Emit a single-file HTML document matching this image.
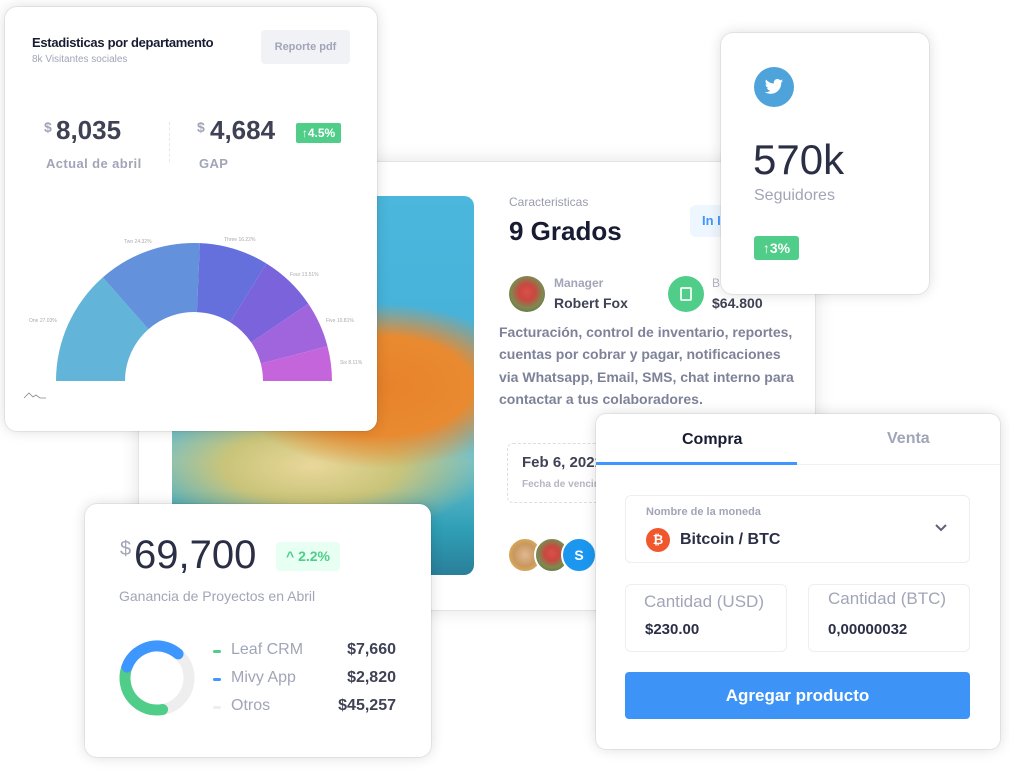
<!DOCTYPE html>
<html><head><meta charset="utf-8">
<style>
*{margin:0;padding:0;box-sizing:border-box}
body{width:1010px;height:784px;background:#fff;position:relative;overflow:hidden;font-family:"Liberation Sans",sans-serif;color:#181c32}
.card{position:absolute;background:#fff;border-radius:12px;box-shadow:0 0 14px rgba(0,0,0,.14),0 0 0 1px rgba(0,0,0,.06)}
.t{position:absolute;white-space:nowrap}
.g{color:#a1a5b7}
.b{font-weight:bold}
</style></head><body>

<!-- center card -->
<div class="card" style="left:139px;top:162px;width:676px;height:448px;border-radius:4px;box-shadow:0 0 20px rgba(0,0,0,.12),0 0 0 1px rgba(0,0,0,.05)">
  <div style="position:absolute;left:33px;top:34px;width:302px;height:379px;border-radius:10px;overflow:hidden;
    background:
     radial-gradient(ellipse 70px 150px at 60px 70px,#b0a8a8 0%,#9a99a6 40%,rgba(150,150,160,0) 75%),
     radial-gradient(ellipse 200px 110px at 210px 190px,#e7822b 0%,#e98a30 45%,rgba(230,130,40,0) 75%),
     radial-gradient(ellipse 220px 90px at 140px 270px,#e9d79a 0%,#c9c47a 40%,rgba(200,190,120,0) 80%),
     linear-gradient(180deg,#4bb7dc 0%,#45b1da 45%,#6cc0d0 70%,#2f9fb6 88%,#2a7f9a 100%)"></div>
  <div class="t g" style="left:370px;top:33px;font-size:12px;color:#9a9cae">Caracteristicas</div>
  <div class="t b" style="left:370px;top:54px;font-size:26px;color:#181c32">9 Grados</div>
  <div style="position:absolute;left:551px;top:43px;width:40px;height:32px;background:#eef6ff;border-radius:6px"></div>
  <div class="t b" style="left:563px;top:51px;font-size:13px;color:#3e97ff">In I</div>
  <div style="position:absolute;left:370px;top:114px;width:36px;height:36px;border-radius:50%;background:radial-gradient(circle at 50% 45%,#d8504a 0%,#c94840 30%,#7d8a50 60%,#4a6040 100%)"></div>
  <div class="t b" style="left:415px;top:114px;font-size:12px;color:#a1a5b7">Manager</div>
  <div class="t b" style="left:415px;top:133px;font-size:14px;color:#3f4254">Robert Fox</div>
  <div style="position:absolute;left:529px;top:114px;width:36px;height:36px;border-radius:50%;background:#50cd89"></div>
  <div style="position:absolute;left:541px;top:125px;width:12px;height:14px;border:2px solid #e6f8ee;border-radius:2px"></div>
  <div class="t" style="left:573px;top:114px;font-size:12px;color:#b5b5c3">B</div>
  <div class="t b" style="left:573px;top:133px;font-size:14px;color:#3f4254">$64.800</div>
  <div class="t b" style="left:360px;top:159px;font-size:14px;line-height:22.3px;color:#7e8299">Facturación, control de inventario, reportes,<br>cuentas por cobrar y pagar, notificaciones<br>via Whatsapp, Email, SMS, chat interno para<br>contactar a tus colaboradores.</div>
  <div style="position:absolute;left:368px;top:281px;width:110px;height:60px;border:1px dashed #dcdde4;border-radius:6px"></div>
  <div class="t b" style="left:383px;top:292px;font-size:15px;color:#3f4254">Feb 6, 2021</div>
  <div class="t b" style="left:383px;top:317px;font-size:10px;color:#b5b5c3">Fecha de vencimiento</div>
  <div style="position:absolute;left:368px;top:375px;width:36px;height:36px;border-radius:50%;background:radial-gradient(circle at 50% 50%,#e0b890 0%,#c99860 50%,#e8c050 100%);border:2px solid #fff"></div>
  <div style="position:absolute;left:395px;top:375px;width:36px;height:36px;border-radius:50%;background:radial-gradient(circle at 50% 45%,#d8504a 0%,#c94840 30%,#7d8a50 60%,#4a6040 100%);border:2px solid #fff"></div>
  <div style="position:absolute;left:422px;top:375px;width:36px;height:36px;border-radius:50%;background:#1b97ef;border:2px solid #fff;color:#fff;font-weight:bold;font-size:14px;text-align:center;line-height:32px">S</div>
</div>

<!-- top left card -->
<div class="card" style="left:5px;top:7px;width:372px;height:424px">
  <div class="t b" style="left:27px;top:28px;font-size:13px;letter-spacing:-.3px;color:#181c32">Estadisticas por departamento</div>
  <div class="t" style="left:27px;top:47px;font-size:10px;color:#a1a5b7">8k Visitantes sociales</div>
  <div style="position:absolute;left:256px;top:23px;width:89px;height:34px;background:#f1f2f6;border-radius:4px;color:#a1a5b7;font-size:11px;font-weight:bold;text-align:center;line-height:34px">Reporte pdf</div>
  <div class="t b" style="left:39px;top:112px;font-size:14px;color:#a1a5b7">$</div>
  <div class="t b" style="left:51px;top:108px;font-size:26px;color:#3f4254">8,035</div>
  <div class="t b" style="left:41px;top:149px;font-size:13px;color:#a1a5b7;letter-spacing:.4px">Actual de abril</div>
  <div style="position:absolute;left:164px;top:115px;height:40px;border-left:1px dashed #e4e6ef"></div>
  <div class="t b" style="left:192px;top:112px;font-size:14px;color:#a1a5b7">$</div>
  <div class="t b" style="left:205px;top:108px;font-size:26px;color:#3f4254">4,684</div>
  <div style="position:absolute;left:291px;top:116px;width:45px;height:20px;background:#50cd89;border-radius:2px;color:#fff;font-size:12px;font-weight:bold;text-align:center;line-height:20px">↑4.5%</div>
  <div class="t b" style="left:194px;top:149px;font-size:13px;color:#a1a5b7;letter-spacing:.4px">GAP</div>
</div>
<svg style="position:absolute;left:0;top:0" width="380" height="430">
  <path d="M56,381 A138,138 0 0 1 102.8,277.4 L148.4,329.2 A69,69 0 0 0 125,381 Z" fill="#63b4d9"/>
  <path d="M102.8,277.4 A138,138 0 0 1 199.9,243.1 L196.9,312.1 A69,69 0 0 0 148.4,329.2 Z" fill="#6491dc"/>
  <path d="M199.9,243.1 A138,138 0 0 1 266.4,263.5 L230.2,322.2 A69,69 0 0 0 196.9,312.1 Z" fill="#6670dc"/>
  <path d="M266.4,263.5 A138,138 0 0 1 308.3,303.7 L251.2,342.4 A69,69 0 0 0 230.2,322.2 Z" fill="#7b63dc"/>
  <path d="M308.3,303.7 A138,138 0 0 1 327.5,346.2 L260.8,363.6 A69,69 0 0 0 251.2,342.4 Z" fill="#a064dc"/>
  <path d="M327.5,346.2 A138,138 0 0 1 332,381 L263,381 A69,69 0 0 0 260.8,363.6 Z" fill="#c565dc"/>
  <g font-size="5" fill="#aaa" font-family="Liberation Sans">
    <text x="29" y="322">One 27.03%</text><text x="124" y="243">Two 24.32%</text>
    <text x="224" y="241">Three 16.22%</text><text x="290" y="276">Four 13.51%</text>
    <text x="326" y="322">Five 10.81%</text><text x="340" y="364">Six 8.11%</text>
  </g>
  <path d="M24,398 L29,393 L33,397 L36,395 L40,398 L46,398" stroke="#888" fill="none" stroke-width="0.8"/>
</svg>

<!-- twitter card -->
<div class="card" style="left:721px;top:33px;width:208px;height:261px">
  <div style="position:absolute;left:33px;top:34px;width:40px;height:40px;border-radius:50%;background:#4ea3db"></div>
  <svg style="position:absolute;left:43px;top:44px" width="20" height="20" viewBox="0 0 24 24"><path fill="#fff" d="M23 4.6c-.8.4-1.7.6-2.6.7.9-.6 1.6-1.4 2-2.5-.9.5-1.9.9-2.9 1.1C18.7 3 17.5 2.4 16.2 2.4c-2.5 0-4.500 2-4.5 4.5 0 .4 0 .7.1 1C8 7.7 4.7 5.9 2.5 3.2c-.4.7-.6 1.4-.6 2.3 0 1.6.8 2.9 2 3.7-.7 0-1.4-.2-2-.6v.1c0 2.2 1.6 4 3.6 4.4-.4.1-.8.2-1.2.2-.3 0-.6 0-.8-.1.6 1.8 2.2 3.1 4.2 3.1-1.5 1.2-3.5 1.9-5.6 1.9H1c2 1.3 4.4 2 6.9 2 8.300 0 12.8-6.9 12.8-12.8v-.6c.9-.6 1.7-1.4 2.3-2.3z"/></svg>
  <div class="t" style="left:32px;top:103px;font-size:42px;color:#2b2f45">570k</div>
  <div class="t" style="left:33px;top:154px;font-size:16px;color:#a1a5b7">Seguidores</div>
  <div style="position:absolute;left:33px;top:203px;width:45px;height:24px;background:#50cd89;border-radius:3px;color:#fff;font-size:14px;font-weight:bold;text-align:center;line-height:24px">↑3%</div>
</div>

<!-- bottom left card -->
<div class="card" style="left:85px;top:504px;width:346px;height:253px">
  <div class="t" style="left:35px;top:34px;font-size:20px;color:#a1a5b7">$</div>
  <div class="t" style="left:49px;top:29px;font-size:40px;color:#2b2f45">69,700</div>
  <div style="position:absolute;left:191px;top:38px;width:64px;height:29px;background:#e8fff3;border-radius:4px;color:#50cd89;font-size:14px;font-weight:bold;text-align:center;line-height:29px">^ 2.2%</div>
  <div class="t" style="left:34px;top:84px;font-size:14px;color:#a1a5b7">Ganancia de Proyectos en Abril</div>
  <svg style="position:absolute;left:33px;top:134px" width="80" height="80" viewBox="0 0 80 80">
    <circle cx="39" cy="40" r="32" stroke="#eeeeef" stroke-width="11" fill="none"/>
    <circle cx="39" cy="40" r="32" stroke="#50cd89" stroke-width="11" fill="none" stroke-linecap="round" stroke-dasharray="85 201" transform="rotate(80 39 40)"/>
    <circle cx="39" cy="40" r="32" stroke="#3e97ff" stroke-width="11" fill="none" stroke-linecap="round" stroke-dasharray="62 201" transform="rotate(200 39 40)"/>
  </svg>
  <div style="position:absolute;left:128px;top:146px;width:8px;height:3px;background:#50cd89;border-radius:2px"></div>
  <div style="position:absolute;left:128px;top:174px;width:8px;height:3px;background:#3e97ff;border-radius:2px"></div>
  <div style="position:absolute;left:128px;top:202px;width:8px;height:3px;background:#eeeeef;border-radius:2px"></div>
  <div class="t" style="left:146px;top:137px;font-size:16px;color:#a1a5b7">Leaf CRM</div>
  <div class="t" style="left:146px;top:165px;font-size:16px;color:#a1a5b7">Mivy App</div>
  <div class="t" style="left:146px;top:193px;font-size:16px;color:#a1a5b7">Otros</div>
  <div class="t b" style="right:35px;top:137px;font-size:16px;color:#3f4254">$7,660</div>
  <div class="t b" style="right:35px;top:165px;font-size:16px;color:#3f4254">$2,820</div>
  <div class="t b" style="right:35px;top:193px;font-size:16px;color:#3f4254">$45,257</div>
</div>

<!-- crypto card -->
<div class="card" style="left:596px;top:414px;width:404px;height:335px;border-radius:10px">
  <div class="t b" style="left:86px;top:17px;font-size:16px;color:#181c32">Compra</div>
  <div class="t b" style="left:291px;top:16px;font-size:16px;color:#a1a5b7">Venta</div>
  <div style="position:absolute;left:200px;top:50px;width:204px;height:1px;background:#eff0f4"></div>
  <div style="position:absolute;left:0;top:48px;width:201px;height:3px;background:#3e97ff"></div>
  <div style="position:absolute;left:29px;top:81px;width:345px;height:68px;border:1px solid #eceef3;border-radius:6px"></div>
  <div class="t b" style="left:50px;top:92px;font-size:11px;color:#a1a5b7">Nombre de la moneda</div>
  <div style="position:absolute;left:50px;top:114px;width:24px;height:24px;border-radius:50%;background:#f1572c;color:#fff;font-size:13px;font-weight:bold;text-align:center;line-height:24px">₿</div>
  <div class="t b" style="left:84px;top:117px;font-size:16px;color:#2b2f45">Bitcoin / BTC</div>
  <svg style="position:absolute;left:338px;top:109px" width="14" height="10"><path d="M2 2 L7 7 L12 2" stroke="#5e6278" stroke-width="2" fill="none"/></svg>
  <div style="position:absolute;left:29px;top:170px;width:162px;height:68px;border:1px solid #eceef3;border-radius:6px"></div>
  <div style="position:absolute;left:212px;top:170px;width:162px;height:68px;border:1px solid #eceef3;border-radius:6px"></div>
  <div class="t" style="left:48px;top:178px;font-size:17px;color:#a1a5b7">Cantidad (USD)</div>
  <div class="t b" style="left:49px;top:207px;font-size:15px;color:#2b2f45">$230.00</div>
  <div class="t" style="left:232px;top:175px;font-size:17px;color:#a1a5b7">Cantidad (BTC)</div>
  <div class="t b" style="left:232px;top:207px;font-size:15px;color:#2b2f45">0,00000032</div>
  <div style="position:absolute;left:29px;top:258px;width:345px;height:47px;background:#3e94f6;border-radius:4px;color:#fff;font-size:17px;font-weight:bold;text-align:center;line-height:47px">Agregar producto</div>
</div>

</body></html>
